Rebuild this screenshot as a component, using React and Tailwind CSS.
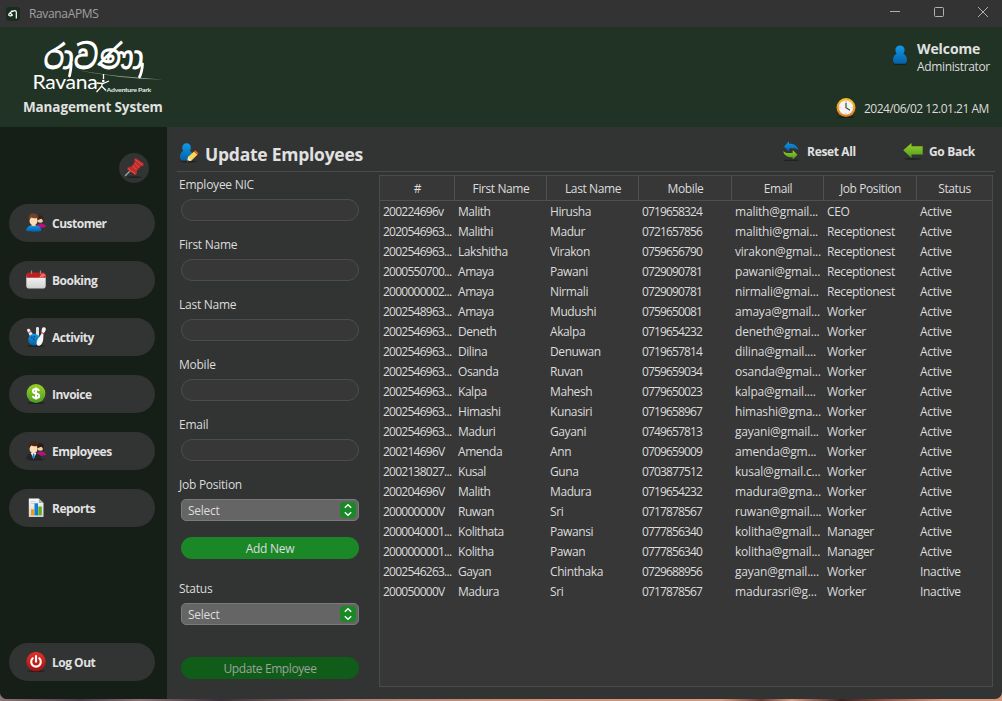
import React from 'react';

const Svg = ({ size = 20, children }) => (
  <svg width={size} height={size} viewBox="0 0 20 20" className="shrink-0">{children}</svg>
);

const Defs = () => (
  <svg width="0" height="0" className="absolute">
    <defs>
      <linearGradient id="blue" x1="0" y1="0" x2="0" y2="1"><stop offset="0" stopColor="#109bea" /><stop offset="1" stopColor="#0560a6" /></linearGradient>
      <linearGradient id="green" x1="0" y1="0" x2="0" y2="1"><stop offset="0" stopColor="#9bd022" /><stop offset="1" stopColor="#4c9c24" /></linearGradient>
      <linearGradient id="red" x1="0" y1="0" x2="0" y2="1"><stop offset="0" stopColor="#e0342a" /><stop offset="1" stopColor="#a80f10" /></linearGradient>
      <linearGradient id="gold" x1="0" y1="0" x2="0" y2="1"><stop offset="0" stopColor="#fcc52c" /><stop offset="1" stopColor="#e9771a" /></linearGradient>
      <linearGradient id="paper" x1="0" y1="0" x2="0" y2="1"><stop offset="0" stopColor="#fafafa" /><stop offset="1" stopColor="#d2d2d2" /></linearGradient>
    </defs>
  </svg>
);

const Shadow = ({ y = 18.6, rx = 9 }) => <ellipse cx="10" cy={y} rx={rx} ry="0.9" fill="#000" opacity="0.35" />;

const PairIcon = ({ suit }) => (
  <Svg>
    {suit && <Shadow />}
    <path d="M10.500 14.500c0-3 2-4 4-4s5.300.8 5.500 3.500c-2 .9-6 .9-9.500.5Z" fill="#b5127e" />
    <circle cx="14.300" cy="6.800" r="3" fill="#f3cfa5" />
    <path d="M11 7.500C10.500 3.500 12.500 2.200 14.500 2.300c2.500.1 3.700 2.200 3.300 6l-.8 2.400c.2-2.700-.3-4.300-1.800-5-1.300.5-2.600 1-4.200 1.800Z" fill={suit ? '#2a1a18' : '#38231f'} />
    <path d="M.3 17.800C.3 14 3 12.200 7.500 12.200s7.800 1.600 7.800 5.600c-3.800 1.200-11 1.200-15 0Z" fill={suit ? '#252527' : 'url(#blue)'} />
    {suit ? <><path d="M4.800 12h5.600l-2.800 6Z" fill="#eee" /><path d="m7.100 12.300 1 0 .9 4-1.400 1.700-1.300-1.700Z" fill="#1877c7" /></> : <path d="M5.200 12.200c1.500 1.500 3.500 1.500 5 0l-2.500-1Z" fill="#f0c595" />}
    <ellipse cx="7.500" cy="7.500" rx="4" ry="4.900" fill="#fbdcb6" />
    <path d="M3.200 7.800C1.700 3.200 4 .6 7 .6c3.600-.2 6.200 1.800 5 7l-.9-2.700C8.500 5.600 6.500 5.300 5.500 4.500 4.600 5.200 4 6 3.200 7.800Z" fill={suit ? '#46251a' : '#704326'} />
  </Svg>
);

const CalendarIcon = () => (
  <Svg>
    <rect x=".3" y="4" width="19.400" height="14.500" rx="2.800" fill="url(#paper)" />
    <path d="M.3 7.800V5.500Q.3 2.500 2.800 2.500h14.400q2.500 0 2.500 3v2.300Z" fill="#bf1e1e" />
    <path d="M13 7.800 15.500 3.500h2q2 .3 2 2.300-2 .5-2.500 2Z" fill="#e96a66" />
    <path d="M5.500.5v3.500M14.500.5v3.500" stroke="#8b8b8b" strokeWidth="1.200" />
  </Svg>
);

const BowlingIcon = () => (
  <Svg>
    <Shadow y="19" />
    <path d="M1 2.800C1.500 1.300 3.500 1.300 4.300 3c.5 1.400 1 2.200 2.200 3.500L9 10 5.500 12 3.300 8C3 6 .9 4.500 1 2.800Z" fill="#ececec" />
    <path d="M11.300-.2c1.700 0 2.100 1.600 1.600 3.200L13 9H9.800l.3-6C9.700 1.300 10 0 11.300-.2Z" fill="#e4e4e4" />
    <path d="m2.600 5.500 2.300-1" stroke="#c22" strokeWidth=".9" />
    <circle cx="8.200" cy="12.600" r="5.900" fill="url(#blue)" />
    <circle cx="5.900" cy="10.400" r=".8" fill="#053b69" /><circle cx="8.500" cy="9.600" r=".8" fill="#053b69" /><circle cx="7.700" cy="12.200" r=".8" fill="#053b69" />
    <path d="M17.200.3c1.900-.4 2.900.8 2.600 2.500-.4 1.600-1.800 2.700-2.300 4.500-.4 2.300.2 5-.9 7.700-.9 2.500-2.300 3.900-4.100 3.800-2-.2-2.300-2.700-1.500-5.100 1-2.500 3.200-4.500 4.300-6.600.6-1.500.1-2.800.4-4.300.2-1.300.7-2.200 1.500-2.500Z" fill="#f4f4f4" />
    <path d="m15.500 5.600 2.800 1.200" stroke="#c22" strokeWidth="1" />
  </Svg>
);

const DollarIcon = () => (
  <Svg>
    <Shadow y="19" />
    <circle cx="10" cy="9.500" r="9.400" fill="url(#green)" />
    <path d="M13.200 6.700C12.500 5.400 11.300 5 10 5 8.300 5 6.900 5.800 6.900 7.300c0 3.200 6.300 1.300 6.300 4.500 0 1.500-1.500 2.300-3.200 2.300-1.500 0-2.800-.5-3.400-1.900M10 3.500v12" fill="none" stroke="#fff" strokeWidth="2" />
  </Svg>
);

const ReportIcon = () => (
  <Svg>
    <path d="M2.800.4h10l4.700 4.700v13.900H2.800Z" fill="url(#paper)" />
    <path d="M12.800.4v4.700h4.700Z" fill="#aaa" />
    <path d="M4.800 3.500h5M4.800 5.500h4" stroke="#c8c8c8" strokeWidth=".8" />
    <rect x="5" y="11.300" width="3.200" height="6" fill="#f39b13" />
    <rect x="8.500" y="5.300" width="3.500" height="12" fill="#0e7fce" />
    <rect x="12.300" y="8.500" width="3.500" height="8.800" fill="#62ad1e" />
  </Svg>
);

const PowerIcon = () => (
  <Svg>
    <Shadow y="19.200" />
    <circle cx="10" cy="9.600" r="9.700" fill="url(#red)" />
    <path d="M6.700 6.300a4.800 4.800 0 1 0 6.600 0M10 4v5.800" fill="none" stroke="#fff" strokeWidth="2.100" strokeLinecap="round" />
  </Svg>
);

const PinIcon = () => (
  <Svg>
    <Shadow y="19.200" rx="8" />
    <path d="m1 18 6.500-6.500" stroke="#a3a3a3" strokeWidth="1.300" />
    <path d="M10.300.9 12 .3l7.700 5.200-.3 2-2.700.9-3.700 4.200-.3 3.500-1.700 1L3 11.300l.7-1.900 3.500-1 3.300-3.700Z" fill="#c42a27" />
    <path d="m11.300 1.600 7.400 5.600M4 10.500l7.500 5.300M8.500 8l4.300 3.700M10.500 5.200l4.700 4.300" stroke="#de6357" strokeWidth=".8" />
  </Svg>
);

const UserIcon = () => (
  <Svg>
    <Shadow y="19" rx="7" />
    <path d="M10 .4a4.600 4.600 0 0 1 4.600 4.700c0 1.600-.6 2.600-1.300 3.700 2.300.8 3.700 3.300 3.700 6.600 0 2-1.300 3.400-3.500 3.400h-7C4.300 18.800 3 17.400 3 15.400c0-3.300 1.400-5.800 3.700-6.600-.7-1.100-1.300-2.100-1.300-3.700A4.600 4.600 0 0 1 10 .4Z" fill="url(#blue)" />
  </Svg>
);

const UserEditIcon = () => (
  <Svg>
    <Shadow />
    <path d="M7.600.3a4.300 4.300 0 0 1 4.300 4.400c0 1.500-.6 2.500-1.200 3.400 2.200.8 3.400 3 3.400 6.200 0 1.900-1.200 3.200-3.300 3.200H4.300C2.200 17.500 1 16.200 1 14.300c0-3.200 1.300-5.400 3.400-6.200-.6-.9-1.200-1.900-1.200-3.400A4.300 4.300 0 0 1 7.600.3Z" fill="url(#blue)" />
    <path d="m8.300 18.200.8-4.500 6-5.200 3.300 3.200-5.900 5.900Z" fill="#fbd755" />
    <path d="m15.100 8.500 1.200-1.200 3 2.900-1 1.500Z" fill="#e85d2a" />
    <path d="m8.300 18.200.8-4.500 3.400 3.900Z" fill="#f8ebc8" />
    <path d="m8.200 18.300.4-1.800 1.300 1.400Z" fill="#333" />
  </Svg>
);

const ClockIcon = () => (
  <Svg>
    <Shadow y="19.200" />
    <circle cx="10" cy="9.600" r="9.500" fill="url(#gold)" />
    <circle cx="10" cy="9.600" r="7.200" fill="#f4f4f4" />
    <path d="M10 4.700v5l4 2.500" fill="none" stroke="#444" strokeWidth="1.200" />
    <path d="M10 3v1M10 15.200v1M3.400 9.600h1M15.600 9.600h1" stroke="#999" strokeWidth=".7" />
  </Svg>
);

const ResetIcon = () => (
  <Svg>
    <Shadow y="19.300" rx="8" />
    <path d="M3 5.500 8 .3v2.400c4.800-.4 8.700 2 9.500 6.500-2.500-2.200-5.500-2.200-9.500-1.500v3Z" fill="url(#blue)" />
    <path d="M16.500 13.700 11.700 18.500v-2.300c-4.800.2-8.600-1.600-9.500-6 2.500 2 5.500 2.200 9.500 1.500V9Z" fill="url(#green)" />
  </Svg>
);

const BackIcon = () => (
  <Svg>
    <Shadow y="17.800" />
    <path d="M.2 9.300 8.500 2v3.300h11.200v8.300H8.500v3.500Z" fill="url(#green)" />
  </Svg>
);

const Logo = () => (
  <svg width="142" height="60" viewBox="0 0 142 60" className="overflow-visible">
    <g transform="translate(19.500 31.500) skewX(-6) scale(1 1.060)">
      <text x="0" y="0" fontSize="32" fontWeight="600" textLength="100" lengthAdjust="spacingAndGlyphs" fill="#fff" fontFamily="Noto Sans Sinhala, Noto Sans, sans-serif">රාවණා</text>
    </g>
    <path d="M48.200 27Q48 33 46.500 39M119.500 27Q119 35 116.500 40" fill="none" stroke="#fff" strokeWidth="2.800" strokeLinecap="round" />
    <path d="M48 32Q80 38.500 140 42.500Q96 42 48 32Z" fill="#dfe6e0" opacity=".6" />
    <text x="9.500" y="51.500" fontSize="18.500" textLength="65" lengthAdjust="spacingAndGlyphs" fill="#fff" fontFamily="Lato, sans-serif">Ravana</text>
    <path d="M80.500 37v5M73.500 46l6.500.5 6-2.500M79.500 46l-1 3.500-5 5.500M79 49.500l4 4" fill="none" stroke="#fff" strokeWidth="1.300" />
    <circle cx="80.300" cy="44" r="1.300" fill="#fff" />
    <text x="83.500" y="54.500" fontSize="6.300" textLength="44.500" lengthAdjust="spacingAndGlyphs" fontWeight="700" fill="#e6ebe7" fontFamily="Lato, sans-serif">Adventure Park</text>
  </svg>
);

const NavButton = ({ icon, children }) => (
  <button className="flex h-[38px] w-[146px] shrink-0 items-center gap-[6px] rounded-full bg-[#323333] pl-[17px] text-[12px] font-bold tracking-[-0.5px] text-[#e1e1e1]">
    {icon}
    <span className="pt-[2px]">{children}</span>
  </button>
);

const Field = ({ label }) => (
  <label className="mb-[12px] block">
    <span className="block h-[22px] leading-[23px]">{label}</span>
    <span className="mt-[4px] ml-[2px] block h-[22px] w-[178px] rounded-full border border-[#4b4c4c] bg-[#373737]" />
  </label>
);

const Select = ({ label }) => (
  <div>
    <div className="h-[22px] leading-[23px]">{label}</div>
    <div className="mt-[4px] ml-[2px] flex h-[22px] w-[178px] items-center justify-between rounded-[5px] border border-[#7a7a7a] bg-[#656565] pr-[2px] pl-[6px]">
      <span className="pt-px leading-[20px]">Select</span>
      <span className="flex size-[16px] items-center justify-center rounded-[4px] bg-[#1b8828]">
        <svg width="16" height="16" viewBox="0 0 16 16"><path d="m4.800 5.800 3.200-3 3.200 3M4.800 10.200l3.200 3 3.200-3" fill="none" stroke="#fff" strokeWidth="1.400" /></svg>
      </span>
    </div>
  </div>
);

const headers = ['#', 'First Name', 'Last Name', 'Mobile', 'Email', 'Job Position', 'Status'];
const rows = [
  ['200224696v', 'Malith', 'Hirusha', '0719658324', 'malith@gmail...', 'CEO', 'Active'],
  ['2020546963...', 'Malithi', 'Madur', '0721657856', 'malithi@gmai...', 'Receptionest', 'Active'],
  ['2002546963...', 'Lakshitha', 'Virakon', '0759656790', 'virakon@gmai...', 'Receptionest', 'Active'],
  ['2000550700...', 'Amaya', 'Pawani', '0729090781', 'pawani@gmai...', 'Receptionest', 'Active'],
  ['2000000002...', 'Amaya', 'Nirmali', '0729090781', 'nirmali@gmai...', 'Receptionest', 'Active'],
  ['2002548963...', 'Amaya', 'Mudushi', '0759650081', 'amaya@gmail...', 'Worker', 'Active'],
  ['2002546963...', 'Deneth', 'Akalpa', '0719654232', 'deneth@gmai...', 'Worker', 'Active'],
  ['2002546963...', 'Dilina', 'Denuwan', '0719657814', 'dilina@gmail....', 'Worker', 'Active'],
  ['2002546963...', 'Osanda', 'Ruvan', '0759659034', 'osanda@gmai...', 'Worker', 'Active'],
  ['2002546963...', 'Kalpa', 'Mahesh', '0779650023', 'kalpa@gmail....', 'Worker', 'Active'],
  ['2002546963...', 'Himashi', 'Kunasiri', '0719658967', 'himashi@gma...', 'Worker', 'Active'],
  ['2002546963...', 'Maduri', 'Gayani', '0749657813', 'gayani@gmail...', 'Worker', 'Active'],
  ['200214696V', 'Amenda', 'Ann', '0709659009', 'amenda@gm...', 'Worker', 'Active'],
  ['2002138027...', 'Kusal', 'Guna', '0703877512', 'kusal@gmail.c...', 'Worker', 'Active'],
  ['200204696V', 'Malith', 'Madura', '0719654232', 'madura@gma...', 'Worker', 'Active'],
  ['200000000V', 'Ruwan', 'Sri', '0717878567', 'ruwan@gmail....', 'Worker', 'Active'],
  ['2000040001...', 'Kolithata', 'Pawansi', '0777856340', 'kolitha@gmail...', 'Manager', 'Active'],
  ['2000000001...', 'Kolitha', 'Pawan', '0777856340', 'kolitha@gmail...', 'Manager', 'Active'],
  ['2002546263...', 'Gayan', 'Chinthaka', '0729688956', 'gayan@gmail....', 'Worker', 'Inactive'],
  ['200050000V', 'Madura', 'Sri', '0717878567', 'madurasri@g...', 'Worker', 'Inactive'],
];
const cols = 'grid grid-cols-[75px_92px_92px_93px_92px_93px_75px]';
const cellTracking = [
  'tracking-[-0.75px]',
  'tracking-[-0.45px]',
  'tracking-[-0.4px]',
  'tracking-[-0.85px]',
  'tracking-[-0.2px]',
  'tracking-[-0.4px]',
  'tracking-[-0.3px]',
];

export default function App() {
  return (
    <div className="flex h-[701px] w-[1002px] flex-col overflow-hidden bg-[linear-gradient(90deg,#8d7478,#4b3d46_8%,#8a7076_14%,#3b3038_22%,#a58078_35%,#c98f76_50%,#d79a80_72%,#6b3a34_76%,#d79a80_79%,#3e211f_84%,#8a4a40_88%,#d4957c_94%)] font-['Open_Sans','Noto_Sans',sans-serif] text-[12px] tracking-[-0.25px] text-[#dcdcdc]">
      <Defs />
      <div className="flex h-[699px] shrink-0 flex-col overflow-hidden rounded-b-[7px] bg-[#323333]">
        <div className="flex h-[27px] shrink-0 items-center bg-[#333333] pl-[6px]">
          <svg width="14" height="14" viewBox="0 0 14 14"><rect width="14" height="14" rx="3" fill="#182d1e" /><path d="M6.500 3.500 3 7C1.800 8.800 5 9.500 6.300 8L4.500 6.300M6.500 5C7.500 3 10.300 3.300 10.300 5.200V11.500" fill="none" stroke="#fff" strokeWidth="1.200" /></svg>
          <span className="ml-[9px] tracking-[-0.35px] text-[#a0a0a0]">RavanaAPMS</span>
          <svg width="112" height="27" viewBox="0 0 112 27" className="ml-auto" fill="none" stroke="#b0b0b0"><path d="M0 11.500h10" /><rect x="44.500" y="7.500" width="9" height="9" rx="1" /><path d="m88 7 10 10M98 7 88 17" /></svg>
        </div>
        <header className="flex h-[100px] shrink-0 justify-between bg-[#203324] pr-[12px]">
          <div className="flex w-[186px] flex-col pt-[10px] pl-[23px]">
            <Logo />
            <div className="text-[13.500px] leading-[21px] font-bold tracking-[-0.13px] whitespace-nowrap text-[#e1e1e1]">Management System</div>
          </div>
          <div className="flex flex-col items-end pt-[12px]">
            <div className="flex w-[101px] gap-[7px] pt-[6px] pl-px">
              <UserIcon />
              <div className="-mt-[6px] whitespace-nowrap">
                <div className="text-[14px] leading-[20px] font-bold tracking-[-0.1px] text-[#e1e1e1]">Welcome</div>
                <div className="leading-[16px] tracking-[-0.35px]">Administrator</div>
              </div>
            </div>
            <div className="mt-[23px] flex w-[154px] items-center gap-[8px]">
              <ClockIcon />
              <span className="pt-px tracking-[-0.5px] whitespace-nowrap">2024/06/02 12.01.21 AM</span>
            </div>
          </div>
        </header>
        <div className="flex min-h-0 flex-1">
          <nav className="flex w-[167px] shrink-0 flex-col bg-[#161f17] pt-[26px] pb-[18px] pl-[9px]">
            <div className="mb-[21px] ml-[110px] flex size-[30px] shrink-0 items-center justify-center rounded-full bg-[#323333]"><PinIcon /></div>
            <div className="flex flex-col gap-[19px]">
              <NavButton icon={<PairIcon />}>Customer</NavButton>
              <NavButton icon={<CalendarIcon />}>Booking</NavButton>
              <NavButton icon={<BowlingIcon />}>Activity</NavButton>
              <NavButton icon={<DollarIcon />}>Invoice</NavButton>
              <NavButton icon={<PairIcon suit />}>Employees</NavButton>
              <NavButton icon={<ReportIcon />}>Reports</NavButton>
            </div>
            <div className="mt-auto"><NavButton icon={<PowerIcon />}>Log Out</NavButton></div>
          </nav>
          <main className="flex flex-1 flex-col pr-[7px] pl-[10px]">
            <div className="flex h-[45px] shrink-0 items-center border-b border-[#4a4b4b] pt-[8px] pl-[2px] font-bold text-[#e1e1e1]">
              <UserEditIcon />
              <h1 className="ml-[6px] pt-[2px] text-[17.500px] tracking-[-0.25px]">Update Employees</h1>
              <button className="ml-auto flex items-center gap-[6px] pb-[4px] tracking-[-0.35px]"><ResetIcon /><span className="pt-[2px]">Reset All</span></button>
              <button className="mr-[20px] ml-[47px] flex items-center gap-[6px] pb-[4px] tracking-[-0.3px]"><BackIcon /><span className="pt-[2px]">Go Back</span></button>
            </div>
            <div className="flex min-h-0 flex-1">
              <form className="w-[202px] shrink-0 pt-px pl-[2px]">
                <Field label="Employee NIC" />
                <Field label="First Name" />
                <Field label="Last Name" />
                <Field label="Mobile" />
                <Field label="Email" />
                <Select label="Job Position" />
                <button type="button" className="mt-[16px] mb-[18px] ml-[2px] block h-[22px] w-[178px] rounded-full bg-[#1b8828] pt-[2px]">Add New</button>
                <Select label="Status" />
                <button type="button" className="mt-[32px] ml-[2px] block h-[22px] w-[178px] rounded-full bg-[#105c19] pt-[2px] tracking-[-0.4px] text-[#9ba39b]">Update Employee</button>
              </form>
              <section className="mt-[3px] h-[512px] w-[614px] border border-[#4a4b4b] bg-[#373737]">
                <div className={`${cols} h-[25px] border-b border-[#4f5050] tracking-[-0.4px]`}>
                  {headers.map((h) => (
                    <div key={h} className="flex items-center justify-center border-r border-[#4f5050] pt-px pl-px last:border-r-0 last:pl-0">{h}</div>
                  ))}
                </div>
                {rows.map((r, i) => (
                  <div key={i} className={`${cols} h-[20px] leading-[22px]`}>
                    {r.map((c, j) => <div key={j} className={`pl-[3px] whitespace-nowrap ${cellTracking[j]}`}>{c}</div>)}
                  </div>
                ))}
              </section>
            </div>
          </main>
        </div>
      </div>
    </div>
  );
}
